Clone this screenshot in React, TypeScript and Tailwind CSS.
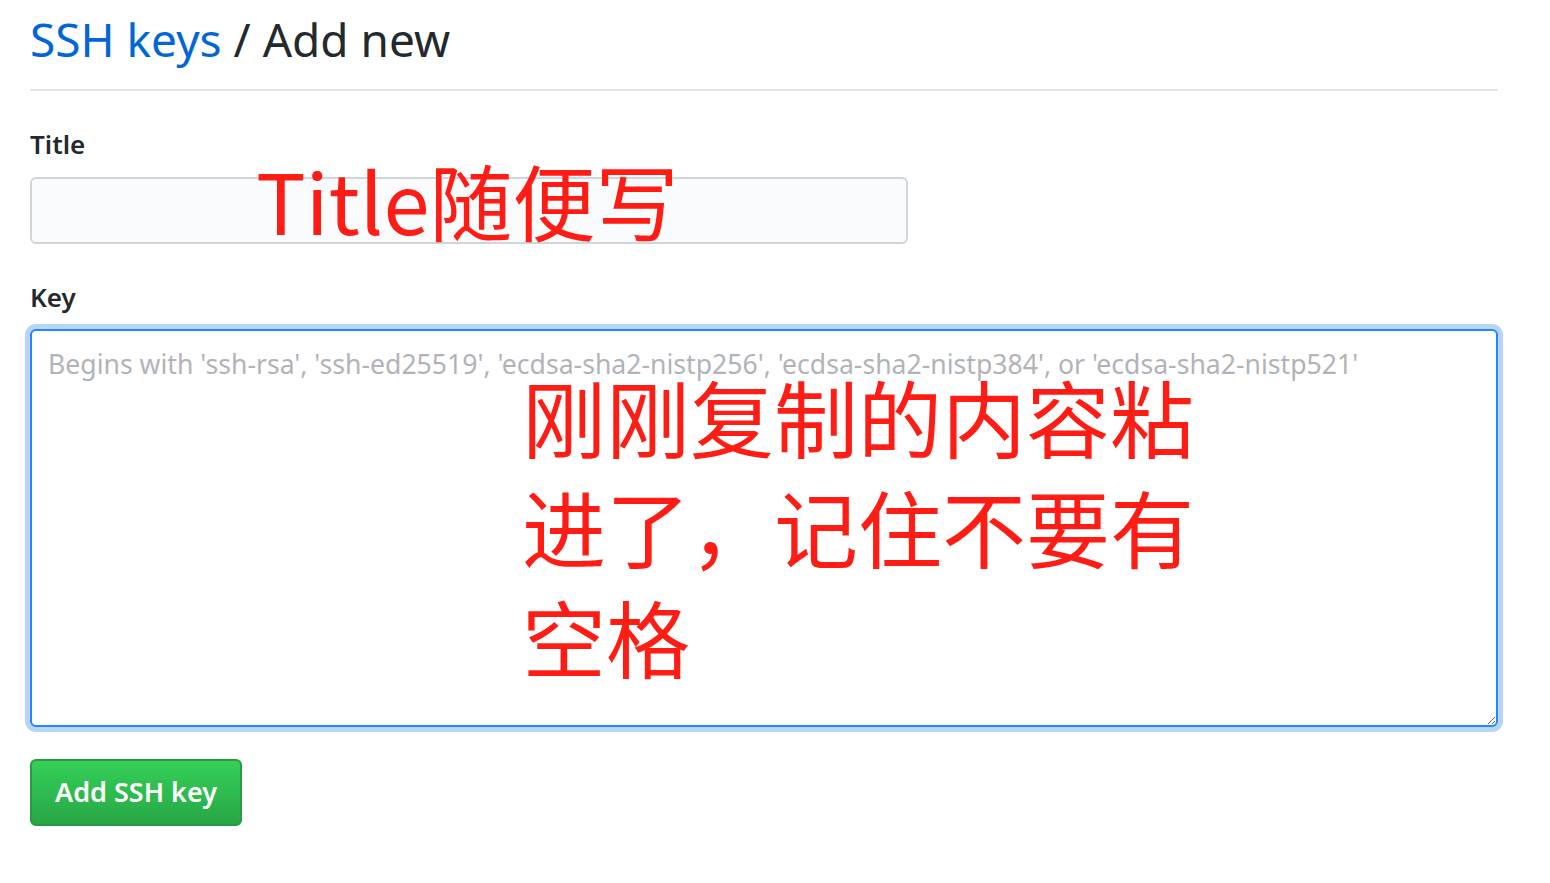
const sans = "font-['Noto_Sans','Open_Sans','Liberation_Sans',sans-serif]";
const cjk = "font-['Noto_Sans_CJK_SC','Noto_Sans',sans-serif]";

export default function App() {
  return (
    <div className={`min-h-screen bg-white text-[#24292e] ${sans}`}>
      <div className="w-[1468px] ml-[30px] pt-[6px]">
        {/* header */}
        <div className="border-b-2 border-[#e1e4e8] pb-[17px]">
          <h2 className="text-[46px] leading-[66px] font-normal">
            <a className="text-[#0366d6]">SSH keys</a> / Add new
          </h2>
        </div>

        {/* form */}
        <form className="mt-[33px]" onSubmit={(e) => e.preventDefault()}>
          <div className="relative">
            <label className="block text-[26px] font-semibold leading-[40px]">Title</label>
            <input
              type="text"
              className="mt-[13px] block w-[878px] h-[67px] bg-[#fafbfc] border-2 border-[#d1d5da] rounded-[6px] px-4 outline-none"
            />
            <span className={`absolute left-[226px] top-[20px] text-[#fe1c15] text-[83px] leading-[110px] pointer-events-none ${cjk}`}>
              Title随便写
            </span>
          </div>

          <div className="mt-[33px] relative">
            <label className="block text-[26px] font-semibold leading-[40px]">Key</label>
            <textarea
              placeholder="Begins with 'ssh-rsa', 'ssh-ed25519', 'ecdsa-sha2-nistp256', 'ecdsa-sha2-nistp384', or 'ecdsa-sha2-nistp521'"
              className="mt-[12px] block w-[1468px] h-[398px] bg-white border-2 border-[#2188ff] rounded-[6px] px-[16px] py-[14px] text-[26.6px] leading-[38px] outline-none shadow-[0_0_0_5px_#b8d5f5] placeholder:text-[#b0b4b8]"
            />
            <div className={`absolute left-[492px] top-[84px] w-[700px] text-[#fe1c15] text-[84px] leading-[110px] pointer-events-none ${cjk}`}>
              <div>刚刚复制的内容粘</div>
              <div>进了，记住不要有</div>
              <div>空格</div>
            </div>
          </div>

          <button
            type="submit"
            className="mt-[32px] h-[67px] px-[23px] rounded-[6px] border-2 border-[#2a9a43] bg-gradient-to-b from-[#34d058] to-[#28a745] text-white text-[27px] font-semibold"
          >
            Add SSH key
          </button>
        </form>
      </div>
    </div>
  );
}
